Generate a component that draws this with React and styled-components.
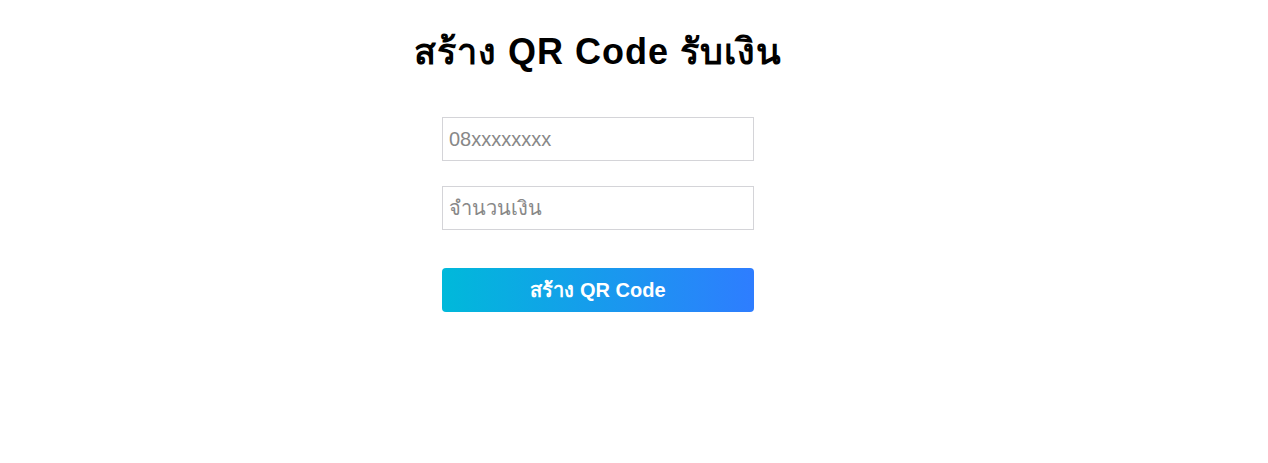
import React from "react";
import styled, { createGlobalStyle } from "styled-components";

const Global = createGlobalStyle`
  body {
    margin: 8px;
    background: #ffffff;
    font-family: Arial, "Liberation Sans", "Noto Sans", sans-serif;
  }
`;

const Page = styled.div`
  display: flex;
  justify-content: flex-start;
  padding-left: 434px;
`;

const Form = styled.div`
  width: 312px;
  display: flex;
  flex-direction: column;
  align-items: center;
`;

const Title = styled.h1`
  margin: 15px 0 37px;
  font-size: 36px;
  letter-spacing: 1px;
  font-weight: bold;
  color: #000;
  white-space: nowrap;
`;

const Input = styled.input`
  box-sizing: border-box;
  width: 312px;
  height: 44px;
  margin-bottom: ${(p) => p.$gap}px;
  padding: 0 6px;
  border: 1px solid #d4d4d8;
  font-family: Arial, "Liberation Sans", sans-serif;
  font-size: 20px;
  color: #333;
  outline: none;
  &::placeholder {
    color: #888888;
  }
`;

const Button = styled.button`
  box-sizing: border-box;
  width: 312px;
  height: 44px;
  border: none;
  border-radius: 4px;
  background: linear-gradient(90deg, #00b9da 0%, #2e7dff 100%);
  color: #fff;
  font-family: Arial, "Liberation Sans", sans-serif;
  font-size: 20px;
  font-weight: bold;
  cursor: pointer;
`;

export default function App() {
  return (
    <>
      <Global />
      <Page>
        <Form>
          <Title>สร้าง QR Code รับเงิน</Title>
          <Input $gap={25} placeholder="08xxxxxxxx" />
          <Input $gap={38} placeholder="จำนวนเงิน" />
          <Button>สร้าง QR Code</Button>
        </Form>
      </Page>
    </>
  );
}
